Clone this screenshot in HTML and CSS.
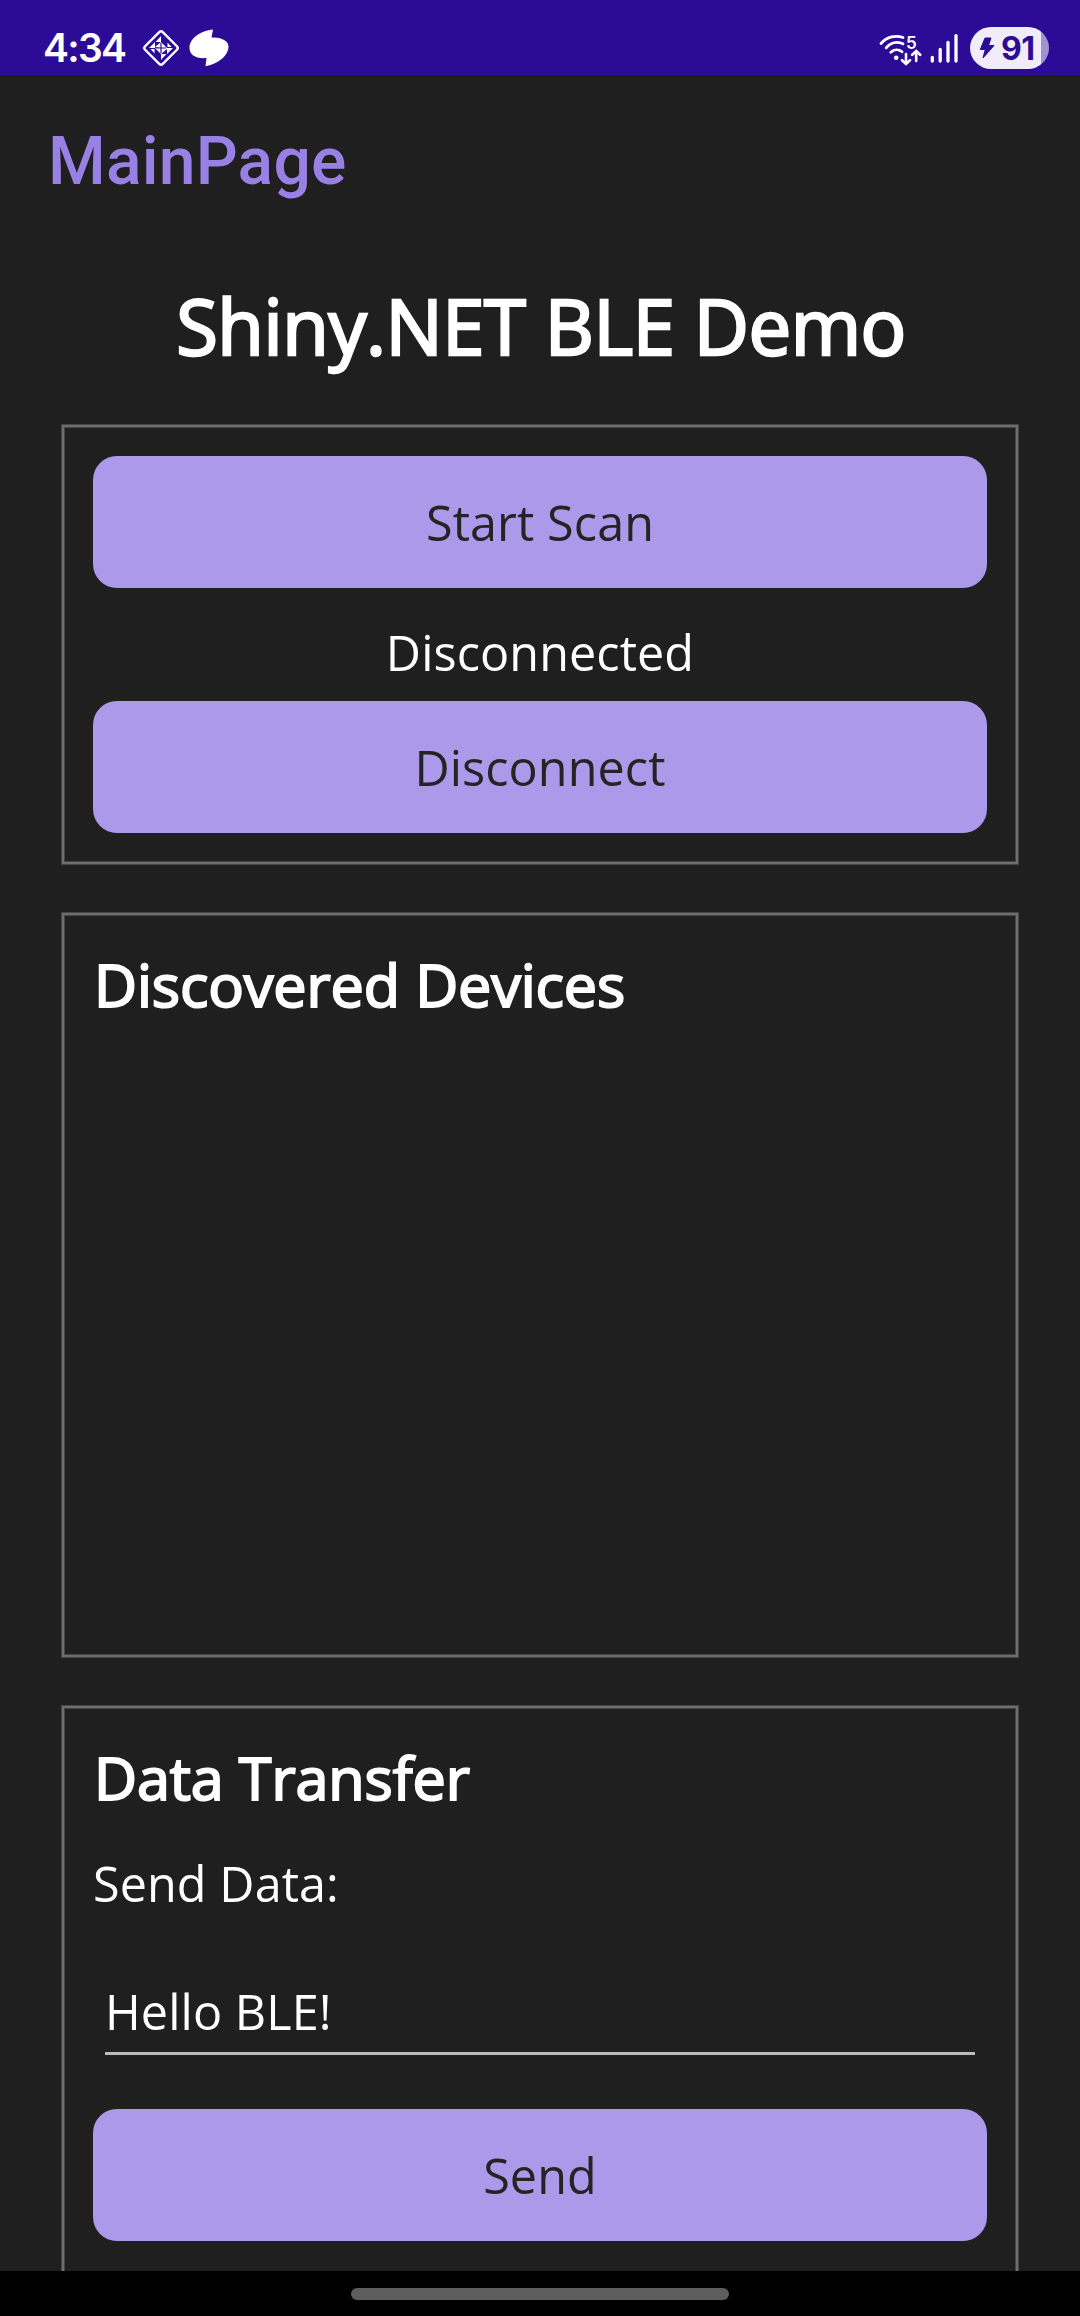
FILE: index.html
```html
<!DOCTYPE html>
<html lang="en">
<head>
<meta charset="utf-8">
<title>MainPage</title>
<link rel="stylesheet" href="styles.css">
</head>
<body>
<div class="screen">
  <header class="status">
    <div class="status-left">
      <span class="clock">4:34</span>
      <svg class="ic-diamond" width="38" height="38" viewBox="0 0 38 38">
        <rect x="6.500" y="6.500" width="25" height="25" rx="2.500" transform="rotate(45 19 19)" fill="none" stroke="#fff" stroke-width="2.400"/>
        <path fill="#fff" d="M19 7v6h-5.500zM13 13v6H7zM25 19h6l-6 6zM19 25h5.500L19 31zM19 13v6l-6-1zM19 13l6 6h-6zM13 19l6 6v-6zM25 19v1l-6 5v-6zM25.500 13.500v4.500h4zM12.500 24.500V20h-4z"/>
        <path fill="none" stroke="#2c0b97" stroke-width="1.200" d="M19 14v10M14 19h10"/>
      </svg>
      <svg class="ic-swirl" width="40" height="38" viewBox="0 0 40 38">
        <path fill="#fff" d="M24 0.500L22.500 8.500C32 8 39.500 11.500 39.500 17.500C39.500 27 28 35.500 16.500 37.200L17.500 29C7 30 0.500 26 0.500 19C0.500 9 12 1.500 24 0.500z"/>
      </svg>
    </div>
    <div class="status-right">
      <div class="wifi">
        <svg width="44" height="36" viewBox="0 0 44 36">
          <g fill="none" stroke="#fff" stroke-width="2.800" stroke-linecap="round">
            <path d="M3 12.500C9 5.800 17.500 3.800 25 6.500"/>
            <path d="M8.200 16.800C12.500 11.500 19 10 25 12.800"/>
            <path d="M12.800 21.300C16 18.300 20.500 17.800 24 20.800"/>
            <path stroke-width="2.600" d="M28 23v9.500M24 29.200l4 3.800 4-3.800M38.200 30v-9.500M34.200 23.800l4-3.800 4 3.800"/>
          </g>
          <circle cx="18.200" cy="26.800" r="2.300" fill="#fff"/>
        </svg>
        <span class="band">5</span>
      </div>
      <svg class="ic-signal" width="28" height="30" viewBox="0 0 28 30">
        <g stroke="#fff" stroke-width="3.300" stroke-linecap="round"><path d="M2.300 24.300v3.800M10.200 16.300v11.800M18 9.300v18.800M26 2.600v25.500"/></g>
      </svg>
      <div class="battery">
        <svg width="16" height="22" viewBox="0 0 16 22"><path fill="#2c0b97" stroke="#2c0b97" stroke-linejoin="round" d="M6 1h6L9.500 8.500H15L4 21 6.300 12.500H1.300z"/></svg>
        <span>91</span>
      </div>
    </div>
  </header>
  <div class="toolbar">MainPage</div>
  <main class="content">
    <h1>Shiny.NET BLE Demo</h1>
    <section class="card">
      <button class="btn">Start Scan</button>
      <p class="state">Disconnected</p>
      <button class="btn">Disconnect</button>
    </section>
    <section class="card devices">
      <h2>Discovered Devices</h2>
    </section>
    <section class="card transfer">
      <h2>Data Transfer</h2>
      <p class="label">Send Data:</p>
      <div class="entry">Hello BLE!</div>
      <button class="btn">Send</button>
    </section>
  </main>
  <footer class="nav"><div class="handle"></div></footer>
</div>
</body>
</html>
```

FILE: styles.css
```css
* { box-sizing: border-box; }
body { margin: 0; background: #1f1f1f; }
.screen {
  width: 1080px; height: 2316px; overflow: hidden;
  display: flex; flex-direction: column;
  background: #1f1f1f; color: #fff;
  font-family: "Open Sans", sans-serif; font-size: 48.500px; letter-spacing: 0.100px;
}
h1, h2, p { margin: 0; font-weight: 400; }

.status {
  flex: none; height: 75px; padding: 22px 31px 0 43px;
  display: flex; justify-content: space-between;
  background: #2c0b97; letter-spacing: 0;
}
.status-left, .status-right { display: flex; align-items: center; height: 52px; }
.clock { font: 600 39px/52px Inter, sans-serif; letter-spacing: -1.700px; width: 99px; }
.ic-diamond { flex: none; }
.ic-swirl { flex: none; margin-left: 9px; }
.ic-signal { margin: 0 12px 0 8px; }
.wifi { position: relative; width: 44px; height: 34px; }
.wifi svg { display: block; }
.band {
  position: absolute; left: 28px; top: 2px;
  font: 600 17px/20px Inter, sans-serif;
}
.battery {
  width: 79px; height: 42px; border-radius: 21px; padding-left: 9px;
  display: flex; align-items: center; gap: 6px;
  background: linear-gradient(to right, #f0edf9 71px, #a294d2 71px);
  color: #2c0b97; font: 700 32px/42px Inter, sans-serif;
}
.battery span { padding-top: 1px; letter-spacing: -0.500px; }

.toolbar {
  flex: none; height: 168px; padding-left: 48px;
  font: 500 66px/173px Roboto, sans-serif; letter-spacing: 0.200px; color: #9880e5;
}
.content {
  flex: 1; min-height: 0; overflow: hidden; padding: 30px 61px 0;
  display: flex; flex-direction: column;
}
h1 {
  flex: none; height: 106px; margin-bottom: 45px; text-align: center; padding-left: 2px;
  font-size: 76px; line-height: 106px; letter-spacing: -0.450px;
  -webkit-text-stroke: 2.500px #fff;
}
.card {
  flex: none; height: 441px; padding: 32px; margin-bottom: 47px;
  display: flex; flex-direction: column;
  box-shadow: inset 0 0 0 1px #464646, inset 0 0 0 3px #6e6e6e, inset 0 0 0 4px #464646;
}
.devices { height: 746px; }
.transfer { height: 700px; }
.btn {
  flex: none; height: 132px; border: 0; border-radius: 24px; padding: 0;
  background: #ac99ea; color: #242424;
  font: 48.500px/66px "Open Sans", sans-serif; letter-spacing: 0.100px;
}
.state { text-align: center; height: 113px; padding-top: 31px; line-height: 66px; }
h2 {
  font-size: 59.300px; line-height: 80px; height: 82px; letter-spacing: -0.120px; padding-left: 1px;
  -webkit-text-stroke: 2px #fff;
}
.label { line-height: 66px; margin-top: 31px; }
.entry {
  height: 77px; margin: 62px 12px 54px; line-height: 66px;
  border-bottom: 3px solid #bcbabc;
}
.nav {
  flex: none; height: 45px; background: #000;
  display: flex; justify-content: center; padding-top: 17px;
}
.handle { width: 378px; height: 12px; border-radius: 6px; background: #5d5d5d; }
```
